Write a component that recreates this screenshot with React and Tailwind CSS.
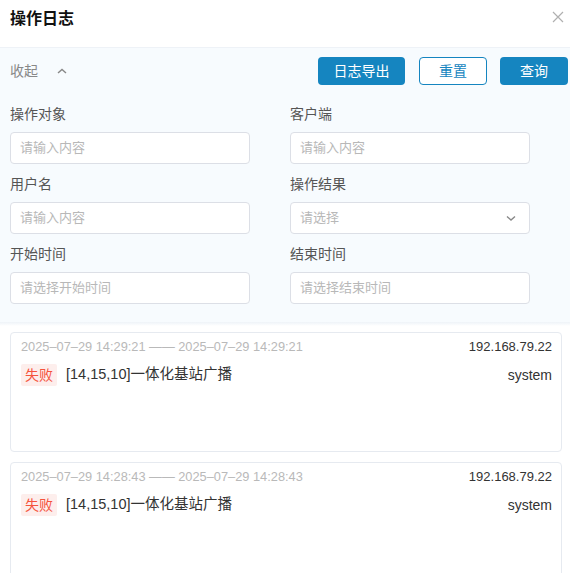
import React from "react";

const font = { fontFamily: '"Liberation Sans", "Noto Sans CJK SC", sans-serif' };

function Field({ label, placeholder, select }) {
  return (
    <div className="flex flex-col">
      <div className="h-[20px] leading-[20px] text-[14px] text-[#555] mb-[8px]">{label}</div>
      <div className="w-[240px] h-[32px] bg-white border border-[#dcdfe6] rounded-[4px] flex items-center justify-between pl-[9px] pr-[12px]">
        <span className="text-[13px] text-[#b8b8b8]">{placeholder}</span>
        {select && (
          <svg width="12" height="12" viewBox="0 0 12 12" fill="none" stroke="#888" strokeWidth="1.4">
            <path d="M2 4.5 L6 8 L10 4.5" />
          </svg>
        )}
      </div>
    </div>
  );
}

function Card({ time }) {
  return (
    <div className="h-[120px] border border-[#e6eaf0] rounded-[4px] bg-white pl-[10px] pr-[9px] pt-[5px]">
      <div className="h-[18px] flex items-center justify-between">
        <span className="text-[12.8px] text-[#b9b9b9]">{`2025–07–29 ${time} —— 2025–07–29 ${time}`}</span>
        <span className="text-[13px] text-[#333]">192.168.79.22</span>
      </div>
      <div className="mt-[8px] h-[22px] flex items-center justify-between">
        <div className="flex items-center">
          <span className="h-[22px] leading-[22px] px-[4px] bg-[#fdeeec] text-[#f5533d] text-[14px] rounded-[2px]">失败</span>
          <span className="ml-[9px] text-[14.5px] text-[#333]">[14,15,10]一体化基站广播</span>
        </div>
        <span className="text-[14px] text-[#333]">system</span>
      </div>
    </div>
  );
}

export default function App() {
  return (
    <div className="w-[570px] h-[573px] bg-white overflow-hidden" style={font}>
      <div className="h-[48px] flex items-start justify-between px-[10px] pt-[8px] border-b border-[#eef2f7]">
        <span className="text-[16px] leading-[22px] font-bold text-[#111]">操作日志</span>
        <svg className="mt-[3px] mr-[-4px]" width="12" height="12" viewBox="0 0 12 12" stroke="#b0b0b0" strokeWidth="1.2">
          <path d="M1 1 L11 11 M11 1 L1 11" />
        </svg>
      </div>
      <div className="bg-[#f7fbfe]">
        <div className="h-[46px] flex items-center justify-between pl-[10px] pr-[2px]">
          <div className="flex items-center">
            <span className="text-[14px] text-[#888]">收起</span>
            <svg className="ml-[18px]" width="12" height="12" viewBox="0 0 12 12" fill="none" stroke="#888" strokeWidth="1.4">
              <path d="M2 8 L6 4.5 L10 8" />
            </svg>
          </div>
          <div className="flex items-center">
            <button className="w-[87px] h-[28px] rounded-[4px] bg-[#1585c0] text-white text-[14px]">日志导出</button>
            <button className="ml-[14px] w-[68px] h-[28px] rounded-[4px] bg-white border border-[#1585c0] text-[#1585c0] text-[14px]">重置</button>
            <button className="ml-[13px] w-[68px] h-[28px] rounded-[4px] bg-[#1585c0] text-white text-[14px]">查询</button>
          </div>
        </div>
        <div className="grid grid-cols-[280px_280px] gap-y-[10px] px-[10px] pt-[10px] pb-[18px]">
          <Field label="操作对象" placeholder="请输入内容" />
          <Field label="客户端" placeholder="请输入内容" />
          <Field label="用户名" placeholder="请输入内容" />
          <Field label="操作结果" placeholder="请选择" select />
          <Field label="开始时间" placeholder="请选择开始时间" />
          <Field label="结束时间" placeholder="请选择结束时间" />
        </div>
      </div>
      <div className="h-[4px] bg-gradient-to-b from-[#eef3f8] to-white"></div>
      <div className="flex flex-col gap-[10px] pl-[10px] pr-[8px] pt-[6px]">
        <Card time="14:29:21" />
        <Card time="14:28:43" />
      </div>
    </div>
  );
}
